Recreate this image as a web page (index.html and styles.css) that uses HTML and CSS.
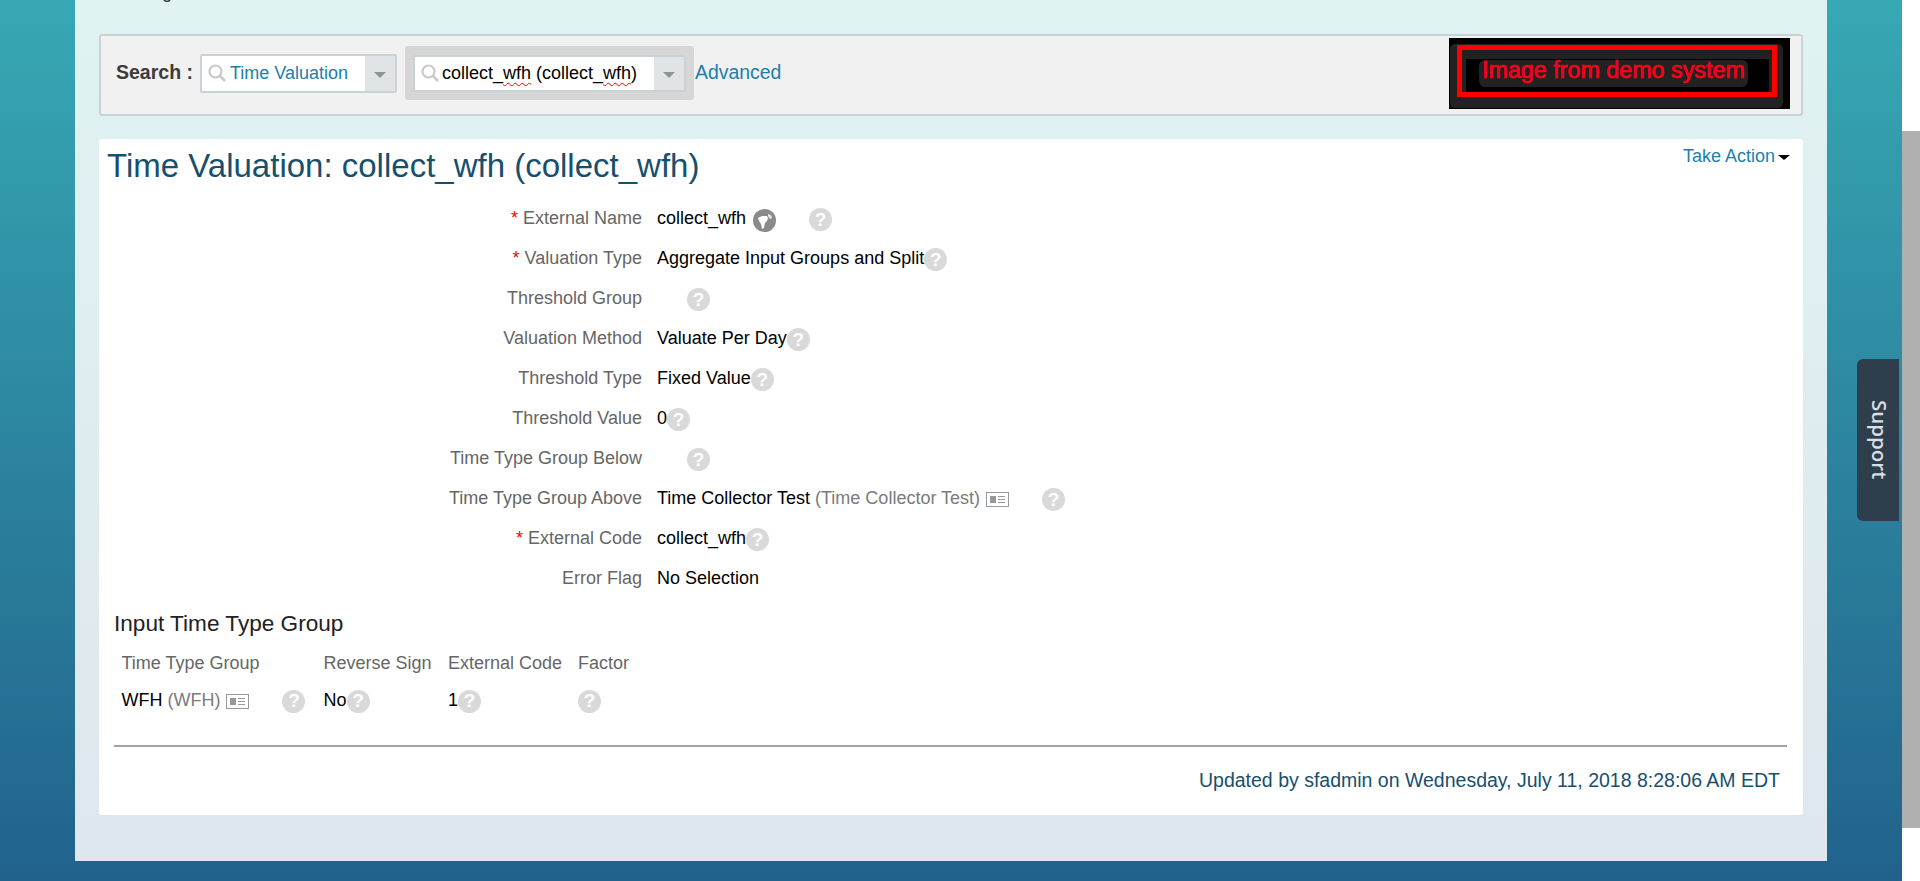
FILE: index.html
```html
<!DOCTYPE html>
<html lang="en">
<head>
<meta charset="utf-8">
<title>Time Valuation: collect_wfh</title>
<link rel="stylesheet" href="styles.css">
</head>
<body>
<div class="stage">
  <main class="panel">
    <p class="crumb">Manage Data</p>
    <section class="searchbar">
      <span class="search-label">Search :</span>
      <div class="combo combo-type">
        <svg class="mag" viewBox="0 0 18 18"><circle cx="7.5" cy="7.5" r="6" fill="none" stroke="#c9c9c9" stroke-width="2.2"/><path d="M12 12l5 5" stroke="#c9c9c9" stroke-width="2.6"/></svg>
        <span class="combo-text link">Time Valuation</span>
        <span class="combo-arrow"><i class="tri"></i></span>
      </div>
      <div class="focus-wrap">
        <div class="combo combo-item">
          <svg class="mag" viewBox="0 0 18 18"><circle cx="7.5" cy="7.5" r="6" fill="none" stroke="#c9c9c9" stroke-width="2.2"/><path d="M12 12l5 5" stroke="#c9c9c9" stroke-width="2.6"/></svg>
          <span class="combo-text">collect_<span class="spell">wfh</span> (collect_<span class="spell">wfh</span>)</span>
          <span class="combo-arrow"><i class="tri"></i></span>
        </div>
      </div>
      <a class="advanced link">Advanced</a>
      <svg class="demo" viewBox="0 0 341 71">
        <rect width="341" height="71" fill="#000"/>
        <rect x="1" y="6" width="333" height="64" rx="5" fill="#222"/>
        <rect x="10.500" y="9.500" width="315" height="47" fill="none" stroke="#f00" stroke-width="5"/>
        <rect x="17" y="21" width="303" height="33" fill="#000"/>
        <rect x="30" y="22" width="269" height="27" rx="6" fill="#222"/>
        <text x="33" y="40" class="demo-text">Image from demo system</text>
      </svg>
    </section>
    <section class="card">
      <header class="card-head">
        <h1 class="title">Time Valuation: collect_wfh (collect_wfh)</h1>
        <a class="action link">Take Action<i class="tri-black"></i></a>
      </header>
      <div class="form">
        <div class="lbl"><b class="req">*</b> External Name</div>
        <div class="val">collect_wfh<svg class="globe" viewBox="0 0 23 23"><circle cx="11.500" cy="11.500" r="11.500" fill="#8a8a8a"/><path d="M5 9l4-2 5 0 1 2-1 3-2 2-1 5-2 1-1-5-2-3z" fill="#fff"/><path d="M15 5l3 1 1 3-2 1-2-3z" fill="#fff" opacity=".8"/></svg><i class="help gap-globe">?</i></div>
        <div class="lbl"><b class="req">*</b> Valuation Type</div>
        <div class="val">Aggregate Input Groups and Split<i class="help">?</i></div>
        <div class="lbl">Threshold Group</div>
        <div class="val"><i class="help empty">?</i></div>
        <div class="lbl">Valuation Method</div>
        <div class="val">Valuate Per Day<i class="help">?</i></div>
        <div class="lbl">Threshold Type</div>
        <div class="val">Fixed Value<i class="help">?</i></div>
        <div class="lbl">Threshold Value</div>
        <div class="val">0<i class="help">?</i></div>
        <div class="lbl">Time Type Group Below</div>
        <div class="val"><i class="help empty">?</i></div>
        <div class="lbl">Time Type Group Above</div>
        <div class="val">Time Collector Test&nbsp;<span class="muted">(Time Collector Test)</span><svg class="cardicon" viewBox="0 0 23 15"><rect x=".5" y=".5" width="22" height="14" fill="none" stroke="#999"/><rect x="4" y="4" width="6" height="7" fill="#999"/><path d="M12 4.500h7M12 7.500h7M12 10.500h7" stroke="#999"/></svg><i class="help gap-card">?</i></div>
        <div class="lbl"><b class="req">*</b> External Code</div>
        <div class="val">collect_wfh<i class="help">?</i></div>
        <div class="lbl">Error Flag</div>
        <div class="val">No Selection</div>
      </div>
      <h2 class="subhead">Input Time Type Group</h2>
      <div class="tbl">
        <div class="th">Time Type Group</div>
        <div class="th">Reverse Sign</div>
        <div class="th">External Code</div>
        <div class="th">Factor</div>
        <div class="td">WFH&nbsp;<span class="muted">(WFH)</span><svg class="cardicon" viewBox="0 0 23 15"><rect x=".5" y=".5" width="22" height="14" fill="none" stroke="#999"/><rect x="4" y="4" width="6" height="7" fill="#999"/><path d="M12 4.500h7M12 7.500h7M12 10.500h7" stroke="#999"/></svg><i class="help gap-wfh">?</i></div>
        <div class="td">No<i class="help">?</i></div>
        <div class="td">1<i class="help">?</i></div>
        <div class="td"><i class="help">?</i></div>
      </div>
      <hr class="rule">
      <p class="updated">Updated by sfadmin on Wednesday, July 11, 2018 8:28:06 AM EDT</p>
    </section>
  </main>
  <div class="support"><span>Support</span></div>
</div>
<div class="scrollbar"><div class="thumb"></div></div>
</body>
</html>
```

FILE: styles.css
```css
* { box-sizing: border-box; }
html, body { margin: 0; height: 881px; overflow: hidden; }
body {
  display: flex;
  font-family: "Liberation Sans", Arial, sans-serif;
  font-size: 18px;
  color: #000;
  background: #fff;
}
.stage {
  position: relative;
  width: 1902px;
  height: 881px;
  padding-left: 75px;
  background: linear-gradient(#37a8b3, #21628c);
}
.panel {
  width: 1752px;
  height: 861px;
  padding: 0 24px;
  background: linear-gradient(#e0f2f2, #dee7ed);
  overflow: hidden;
}
.crumb {
  margin: -18px 0 0;
  height: 52px;
  padding-left: 18px;
  line-height: 20px;
  color: #333;
}
.searchbar {
  display: flex;
  align-items: center;
  height: 82px;
  padding: 0 11px 4px 15px;
  background: #f1f1f1;
  border: 2px solid #c9d2d4;
  border-radius: 3px;
}
.search-label {
  width: 84px;
  margin-bottom: 2px;
  font-size: 19.5px;
  font-weight: bold;
  color: #3b3b3b;
  white-space: nowrap;
}
.combo {
  display: flex;
  align-items: center;
  background: #fff;
  border: 2px solid #c9d2d4;
  border-radius: 2px;
  height: 39px;
}
.combo-type { width: 197px; }
.combo-item { width: 273px; height: 37px; }
.mag { width: 18px; height: 18px; margin-left: 6px; flex: none; }
.combo-text { flex: 1; margin-left: 4px; white-space: nowrap; }
.combo-item .combo-text { margin-left: 3px; }
.combo-arrow {
  display: flex;
  align-items: center;
  justify-content: center;
  width: 30px;
  height: 100%;
  background: #e0e4e7;
  flex: none;
}
.tri {
  margin-top: 4px;
  border-style: solid;
  border-width: 6px 6px 0;
  border-color: #8a9597 transparent transparent;
}
.focus-wrap {
  display: flex;
  align-items: center;
  margin-left: 8px;
  width: 289px;
  height: 54px;
  padding-left: 8px;
  background: #d6d6d6;
  border-radius: 3px;
}
.link { color: #1a7fad; }
.advanced { font-size: 19.4px; margin-left: 1px; margin-bottom: 1px; }
.demo { width: 341px; height: 71px; margin-left: auto; flex: none; }
.demo-text {
  font-family: "Liberation Sans", Arial, sans-serif;
  font-size: 23.3px;
  fill: #f0003a;
  stroke: #f00;
  stroke-width: .7;
}
.card {
  margin-top: 23px;
  height: 676px;
  padding: 0 16px 0 8px;
  background: #fff;
  border-radius: 3px;
}
.card-head {
  display: flex;
  justify-content: space-between;
  height: 49px;
}
.title {
  margin: 7px 0 0;
  font-size: 33px;
  font-weight: normal;
  line-height: 40px;
  color: #174f6e;
  white-space: nowrap;
}
.action { display: flex; align-items: center; height: 20px; margin-top: 7px; color: #1a7fad; margin-right: -3px; }
.tri-black {
  margin-left: 3px;
  margin-top: 3px;
  border-style: solid;
  border-width: 5px 6px 0;
  border-color: #000 transparent transparent;
}
.form {
  display: grid;
  grid-template-columns: 535px 1fr;
  grid-auto-rows: 40px;
  column-gap: 15px;
  margin-top: 11px;
}
.lbl {
  text-align: right;
  color: #666;
  line-height: 39px;
  white-space: nowrap;
}
.req { color: #f00; font-weight: normal; }
.val { display: flex; align-items: center; height: 39px; white-space: nowrap; }
.muted { color: #7b7b7b; }
.help {
  display: inline-flex;
  align-items: center;
  justify-content: center;
  flex: none;
  width: 23px;
  height: 23px;
  margin-top: 2px;
  border-radius: 50%;
  background: #d9d9d9;
  color: #fff;
  font-style: normal;
  font-weight: bold;
  font-size: 19px;
}
.empty { margin-left: 30px; }
.gap-globe { margin-left: 33px; }
.gap-card { margin-left: 33px; }
.gap-wfh { margin-left: 33px; }
.globe { width: 23px; height: 23px; margin-left: 7px; margin-top: 4px; flex: none; }
.cardicon { width: 23px; height: 15px; margin-left: 6px; margin-top: 2px; flex: none; }
.subhead {
  margin: 10px 0 0 7px;
  font-size: 22.6px;
  font-weight: normal;
  line-height: 30px;
  color: #222;
}
.tbl {
  display: grid;
  grid-template-columns: 202px 124.500px 130px 1fr;
  margin: 13px 0 0 14.500px;
}
.th { height: 28px; line-height: 22px; color: #666; white-space: nowrap; }
.td { display: flex; align-items: center; height: 40px; white-space: nowrap; }
.rule {
  margin: 25px 0 0 7px;
  border: 0;
  height: 2px;
  background: #a3a3a3;
}
.updated {
  margin: 22px 7px 0 0;
  font-size: 19.5px;
  line-height: 22px;
  text-align: right;
  color: #174f6e;
}
.spell {
  text-decoration: underline wavy #f00 1px;
  text-underline-offset: 3px;
}
.support {
  position: absolute;
  left: 1857px;
  top: 359px;
  width: 42px;
  height: 162px;
  display: flex;
  align-items: center;
  justify-content: center;
  padding-left: 3px;
  background: #2f3e4c;
  border-radius: 6px 0 0 6px;
}
.support span {
  writing-mode: vertical-rl;
  color: #d9dfe2;
  font-size: 20.5px;
  font-family: "Open Sans", sans-serif;
  font-weight: 600;
}
.scrollbar { flex: 1; height: 881px; background: #fff; }
.thumb { height: 697px; margin-top: 131px; background: #b0b0b0; }
```
